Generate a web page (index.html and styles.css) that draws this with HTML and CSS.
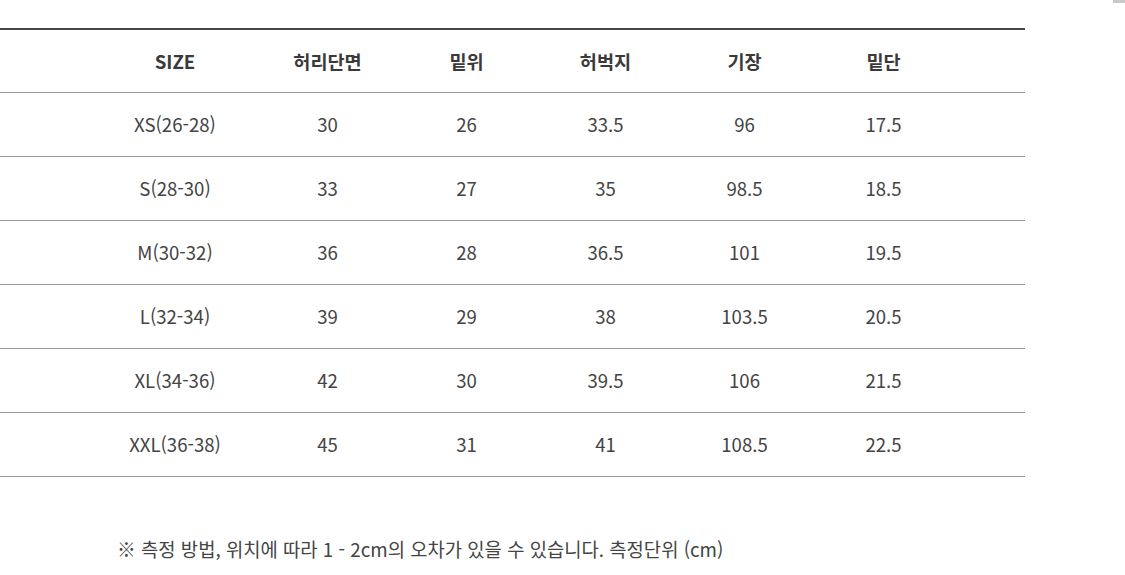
FILE: index.html
```html
<!DOCTYPE html>
<html lang="ko">
<head>
<meta charset="utf-8">
<title>Size chart</title>
<link rel="stylesheet" href="styles.css">
</head>
<body>
<div class="corner-mark"></div>
<div class="chart">
  <div class="row head">
    <div class="cell first">SIZE</div>
    <div class="cell">허리단면</div>
    <div class="cell">밑위</div>
    <div class="cell">허벅지</div>
    <div class="cell">기장</div>
    <div class="cell">밑단</div>
  </div>
  <div class="row">
    <div class="cell first">XS(26-28)</div>
    <div class="cell">30</div>
    <div class="cell">26</div>
    <div class="cell">33.5</div>
    <div class="cell">96</div>
    <div class="cell">17.5</div>
  </div>
  <div class="row">
    <div class="cell first">S(28-30)</div>
    <div class="cell">33</div>
    <div class="cell">27</div>
    <div class="cell">35</div>
    <div class="cell">98.5</div>
    <div class="cell">18.5</div>
  </div>
  <div class="row">
    <div class="cell first">M(30-32)</div>
    <div class="cell">36</div>
    <div class="cell">28</div>
    <div class="cell">36.5</div>
    <div class="cell">101</div>
    <div class="cell">19.5</div>
  </div>
  <div class="row">
    <div class="cell first">L(32-34)</div>
    <div class="cell">39</div>
    <div class="cell">29</div>
    <div class="cell">38</div>
    <div class="cell">103.5</div>
    <div class="cell">20.5</div>
  </div>
  <div class="row">
    <div class="cell first">XL(34-36)</div>
    <div class="cell">42</div>
    <div class="cell">30</div>
    <div class="cell">39.5</div>
    <div class="cell">106</div>
    <div class="cell">21.5</div>
  </div>
  <div class="row">
    <div class="cell first">XXL(36-38)</div>
    <div class="cell">45</div>
    <div class="cell">31</div>
    <div class="cell">41</div>
    <div class="cell">108.5</div>
    <div class="cell">22.5</div>
  </div>
</div>
<p class="note">※ 측정 방법, 위치에 따라 1 - 2cm의 오차가 있을 수 있습니다. 측정단위 (cm)</p>
</body>
</html>
```
FILE: styles.css
```css
html, body {
  margin: 0;
  padding: 0;
  background: #ffffff;
}
body {
  font-family: "Noto Sans CJK KR", "Noto Sans", sans-serif;
  color: #444444;
  font-size: 18.6px;
  position: relative;
}
.corner-mark {
  position: absolute;
  top: 0;
  right: 0;
  width: 12px;
  height: 3px;
  background: #c8c8c8;
}
.chart {
  width: 1025px;
  margin-top: 28px;
  border-top: 2px solid #474747;
}
.row {
  display: grid;
  grid-template-columns: 166px repeat(5, 139px) 1fr;
  padding-left: 92px;
  height: 63px;
  align-items: center;
  border-bottom: 1px solid #9a9a9a;
}
.row.head {
  height: 62px;
  font-weight: 700;
  color: #3a3a3a;
}
.cell {
  text-align: center;
  line-height: 1;
}
.note {
  margin: 59px 0 0 117px;
  font-size: 18.8px;
  line-height: 1.4;
  color: #444444;
}
```
